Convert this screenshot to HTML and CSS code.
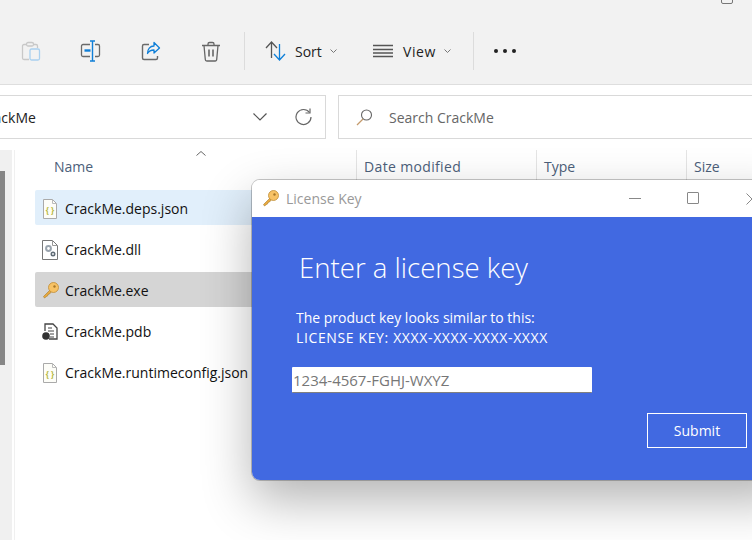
FILE: index.html
```html
<!DOCTYPE html>
<html lang="en">
<head>
<meta charset="UTF-8">
<meta name="viewport" content="width=device-width, initial-scale=1.0">
<title>License Key</title>
<link rel="stylesheet" href="styles.css">
</head>
<body>
    <div class="explorer">
        <div class="toolbar">
            <span class="parent-max"></span>
            <div class="tool">
                <svg width="20" height="20" viewBox="0 0 20 20" fill="none"><path d="M5 3.500H3a1.500 1.500 0 0 0-1.500 1.500v12A1.500 1.500 0 0 0 3 18.500h5M13 3.500h2A1.500 1.500 0 0 1 16.500 5v2" stroke="#c8c8c8" stroke-width="1.300"/><rect x="5.500" y="1.500" width="7" height="3.500" rx="1.500" stroke="#c8c8c8" stroke-width="1.300"/><rect x="9" y="8" width="9.500" height="11" rx="1.500" fill="#f2f2f2" stroke="#a9d0ef" stroke-width="1.300"/></svg>
            </div>
            <div class="tool">
                <svg width="22" height="22" viewBox="0 0 22 22" fill="none"><path d="M10 4.500H3A1.500 1.500 0 0 0 1.500 6v9A1.500 1.500 0 0 0 3 16.500h7M15 4.500h3A1.500 1.500 0 0 1 19.500 6v9a1.500 1.500 0 0 1-1.500 1.500h-3" stroke="#6a6a6a" stroke-width="1.300"/><path d="M4.500 10.500h6" stroke="#0f7fd8" stroke-width="2.400"/><path d="M10 1h5M12.500 1v20M10 21h5" stroke="#0f7fd8" stroke-width="1.400"/></svg>
            </div>
            <div class="tool">
                <svg width="20" height="20" viewBox="0 0 20 20" fill="none"><path d="M8 3.500H3A1.500 1.500 0 0 0 1.500 5v12A1.500 1.500 0 0 0 3 18.500h12a1.500 1.500 0 0 0 1.500-1.500v-2" stroke="#6a6a6a" stroke-width="1.400"/><path d="M13 1.500l5.500 5.500-5.500 5v-3c-3 0-5 .8-6.500 3.500 0-4.500 2.500-7.500 6.500-7.500z" fill="#f2f2f2" stroke="#0f7fd8" stroke-width="1.300" stroke-linejoin="round"/></svg>
            </div>
            <div class="tool">
                <svg width="20" height="21" viewBox="0 0 20 21" fill="none" stroke="#666" stroke-width="1.300"><path d="M1 4.500h18M7 4.500V3a1.500 1.500 0 0 1 1.500-1.500h3A1.500 1.500 0 0 1 13 3v1.500M3 4.500l1.300 14a1.500 1.500 0 0 0 1.500 1.500h8.400a1.500 1.500 0 0 0 1.500-1.500l1.300-14"/><path d="M8 8.500v7M12 8.500v7" stroke-width="1.600"/></svg>
            </div>
            <div class="sep first-sep"></div>
            <div class="menu sort">
                <svg width="21" height="20" viewBox="0 0 21 20" fill="none" stroke-width="1.300"><path d="M1 7l5.500-6 5.500 6M6.500 1v16" stroke="#555"/><path d="M9 13l5.500 6 5.500-6M14.500 19V3" stroke="#0f7fd8"/></svg>
                <span class="menu-label">Sort</span>
                <svg class="caret" width="7" height="4" viewBox="0 0 7 4" fill="none"><path d="M.5.500l3 3 3-3" stroke="#777"/></svg>
            </div>
            <div class="menu view">
                <svg width="20" height="14" viewBox="0 0 20 14" fill="none" stroke="#555" stroke-width="1.300"><path d="M0 1.500h20M0 5.500h20M0 9h20M0 12.500h20"/></svg>
                <span class="menu-label">View</span>
                <svg class="caret" width="7" height="4" viewBox="0 0 7 4" fill="none"><path d="M.5.500l3 3 3-3" stroke="#777"/></svg>
            </div>
            <div class="sep"></div>
            <div class="more"><i></i><i></i><i></i></div>
        </div>

        <div class="addressbar">
            <div class="address">
                <span class="address-text">CrackMe</span>
                <svg class="address-down" width="14" height="8" viewBox="0 0 14 8" fill="none"><path d="M.5.500L7 7 13.500.500" stroke="#555" stroke-width="1.200"/></svg>
                <svg class="refresh" width="17" height="18" viewBox="0 0 17 18" fill="none" stroke="#666" stroke-width="1.200"><path d="M14.500 4.500A7.500 7.500 0 1 0 16 9"/><path d="M15 .5v4.500h-4.500"/></svg>
            </div>
            <div class="search">
                <svg width="17" height="17" viewBox="0 0 17 17" fill="none"><circle cx="10.500" cy="6" r="5" stroke="#666" stroke-width="1.100"/><path d="M7 10L1 16" stroke="#c49a6c" stroke-width="1.300"/></svg>
                <span>Search CrackMe</span>
            </div>
        </div>

        <div class="content">
            <div class="nav"><div class="nav-thumb"></div></div>
            <div class="files">
                <div class="head">
                    <div class="col col-name">Name<svg class="sort-up" width="10" height="5" viewBox="0 0 10 5" fill="none"><path d="M.5 4.500L5 .5l4.500 4" stroke="#666"/></svg></div>
                    <div class="col col-date">Date modified</div>
                    <div class="col col-type">Type</div>
                    <div class="col col-size">Size</div>
                </div>
                <div class="rows">
                    <div class="row hover">
                        <svg class="ficon" width="16" height="20" viewBox="0 0 16 20" fill="none"><path d="M1.500 .5h9l4 4v15h-13z" fill="#fdfdf8" stroke="#aaa"/><path d="M10.500 .5v4h4" stroke="#bbb"/><text x="8" y="13.500" class="json-mark">{ }</text></svg>
                        CrackMe.deps.json
                    </div>
                    <div class="row">
                        <svg class="ficon" width="16" height="20" viewBox="0 0 16 20" fill="none"><path d="M.5 .5h10l5 5v14H.5z" fill="#fff" stroke="#777"/><path d="M10.500 .5v5h5" stroke="#999"/><circle cx="6.500" cy="8.500" r="2.400" stroke="#99a3ad" stroke-width="2"/><circle cx="11" cy="14" r="1.700" stroke="#5f6b76" stroke-width="1.600"/></svg>
                        CrackMe.dll
                    </div>
                    <div class="row selected">
                        <svg class="ficon key-icon" width="17" height="17" viewBox="0 0 17 17"><path d="M9 7L1.500 14.500l1 1.500 2-1.500 1-.5.500-1.500 1.500-.5 3-3.500z" fill="#e8a93f" stroke="#a67a2a" stroke-width=".6"/><circle cx="11.500" cy="5.500" r="5" fill="#f7c265" stroke="#c08d35" stroke-width=".8"/><circle cx="12.500" cy="4.500" r="1.200" fill="#a8782a"/></svg>
                        CrackMe.exe
                    </div>
                    <div class="row">
                        <svg class="ficon" width="16" height="18" viewBox="0 0 16 18" fill="none"><path d="M3 8V1h8l4 4v11H7" fill="#fff" stroke="#444" stroke-width="1.300"/><path d="M6 5h4M6 8h6M8 11h4M8 14h4" stroke="#444"/><circle cx="4" cy="13" r="3.800" fill="#333"/></svg>
                        CrackMe.pdb
                    </div>
                    <div class="row">
                        <svg class="ficon" width="16" height="20" viewBox="0 0 16 20" fill="none"><path d="M1.500 .5h9l4 4v15h-13z" fill="#fdfdf8" stroke="#aaa"/><path d="M10.500 .5v4h4" stroke="#bbb"/><text x="8" y="13.500" class="json-mark">{ }</text></svg>
                        CrackMe.runtimeconfig.json
                    </div>
                </div>
            </div>
        </div>
    </div>

    <div class="dialog">
        <div class="titlebar">
            <svg width="17" height="17" viewBox="0 0 17 17"><path d="M9 7L1.500 14.500l1 1.500 2-1.500 1-.5.500-1.500 1.500-.5 3-3.500z" fill="#e8a93f" stroke="#a67a2a" stroke-width=".6"/><circle cx="11.500" cy="5.500" r="5" fill="#f7c265" stroke="#c08d35" stroke-width=".8"/><circle cx="12.500" cy="4.500" r="1.200" fill="#a8782a"/></svg>
            <span class="title-text">License Key</span>
            <span class="win-min"></span>
            <span class="win-max"></span>
            <svg class="win-close" width="12" height="12" viewBox="0 0 12 12" fill="none"><path d="M.5.500l11 11M11.500.500l-11 11" stroke="#888"/></svg>
        </div>
        <div class="dialog-body">
            <h1>Enter a license key</h1>
            <p>The product key looks similar to this:<br><span class="key-format">LICENSE KEY: XXXX-XXXX-XXXX-XXXX</span></p>
            <input class="key-input" type="text" placeholder="1234-4567-FGHJ-WXYZ">
            <div class="actions"><button>Submit</button></div>
        </div>
    </div>
</body>
</html>
```

FILE: styles.css
```css
* {
    box-sizing: border-box;
}
html, body {
    height: 100%;
}
body {
    margin: 0;
    overflow: hidden;
    position: relative;
    background-color: #fff;
    font-family: "Open Sans", Arial, sans-serif;
    font-size: 14px;
    color: #1a1a1a;
}
svg {
    display: block;
    flex: none;
}

/* explorer behind */
.explorer {
    height: 100%;
    display: flex;
    flex-direction: column;
}
.toolbar {
    height: 85px;
    flex: none;
    padding: 32px 0 14px 1px;
    display: flex;
    align-items: center;
    background-color: #f2f2f2;
    border-bottom: 1px solid #dedede;
}
.parent-max {
    position: absolute;
    left: 721px;
    top: -8px;
    width: 12px;
    height: 12px;
    border: 1px solid #777;
    border-radius: 2px;
}
.tool {
    width: 60px;
    display: flex;
    justify-content: center;
}
.sep {
    width: 1px;
    height: 38px;
    background-color: #dcdcdc;
}
.first-sep {
    margin-left: 3px;
}
.menu {
    display: flex;
    align-items: center;
}
.menu-label {
    font-size: 14px;
    color: #222;
    margin: 0 8px 0 10px;
}
.sort {
    margin-left: 20px;
    width: 108px;
}
.sort .menu-label {
    margin-left: 9px;
}
.view {
    width: 100px;
}
.view .menu-label {
    letter-spacing: 0.6px;
}
.more {
    margin-left: 20px;
    display: flex;
    gap: 5px;
}
.more i {
    width: 4px;
    height: 4px;
    border-radius: 50%;
    background-color: #222;
}

.addressbar {
    height: 65px;
    flex: none;
    padding-top: 10px;
    display: flex;
    gap: 12px;
}
.address, .search {
    height: 44px;
    display: flex;
    align-items: center;
    border: 1px solid #d9d9d9;
    overflow: hidden;
}
.address {
    width: 326px;
    border-left: none;
}
.address-text {
    margin-left: -21px;
    width: 274px;
    flex: none;
    color: #222;
}
.address-down {
    margin-right: 28px;
}
.search {
    flex: 1;
    padding-left: 17px;
    border-right: none;
    color: #666;
}
.search span {
    margin-left: 16px;
}

.content {
    flex: 1;
    display: flex;
}
.nav {
    width: 12px;
    background-color: #f0f0f0;
    padding-top: 21px;
}
.nav-thumb {
    width: 5px;
    height: 194px;
    background-color: #868686;
}
.files {
    flex: 1;
    border-left: 1px solid #f0f0f0;
    margin-left: 2px;
}
.head {
    height: 30px;
    display: flex;
    color: #4c607a;
}
.col {
    padding: 7px 0 0 7px;
    border-right: 1px solid #e5e5e5;
}
.col-name {
    width: 342px;
    padding-left: 39px;
    position: relative;
}
.sort-up {
    position: absolute;
    left: 181px;
    top: 1px;
}
.col-date {
    width: 180px;
    letter-spacing: 0.35px;
}
.col-type {
    width: 150px;
}
.col-size {
    flex: 1;
    border-right: none;
}
.rows {
    padding: 10px 0 0 20px;
    display: flex;
    flex-direction: column;
    gap: 6px;
}
.row {
    height: 35px;
    display: flex;
    align-items: center;
    padding: 2px 0 0 7px;
    border-radius: 2px;
    color: #111;
}
.row .ficon {
    margin-right: 7px;
}
.row .key-icon {
    margin-right: 6px;
}
.row.hover {
    background-color: #e1effb;
}
.row.selected {
    background-color: #d5d5d5;
}
.json-mark {
    font-size: 8px;
    font-weight: 700;
    fill: #b5b83a;
    text-anchor: middle;
}

/* license dialog */
.dialog {
    position: absolute;
    left: 252px;
    top: 180px;
    width: 540px;
    height: 300px;
    border-radius: 8px;
    box-shadow: 0 20px 50px rgba(0, 0, 0, 0.3), 0 0 0 1px rgba(0, 0, 0, 0.22);
    overflow: hidden;
    display: flex;
    flex-direction: column;
}
.titlebar {
    height: 37px;
    flex: none;
    padding-left: 10px;
    display: flex;
    align-items: center;
    background-color: #fff;
}
.title-text {
    margin-left: 7px;
    width: 343px;
    color: #999;
}
.win-min {
    width: 12px;
    height: 1px;
    background-color: #888;
}
.win-max {
    width: 12px;
    height: 12px;
    margin: -1px 0 0 46px;
    border: 1px solid #888;
    border-radius: 1px;
}
.win-close {
    margin-left: 47px;
}
.dialog-body {
    flex: 1;
    padding: 32px 0 0 40px;
    background-color: #4169e1;
    color: #fff;
}
.dialog-body h1 {
    margin: 0 0 0 7px;
    font-size: 27.6px;
    font-weight: 300;
    line-height: 36px;
}
.dialog-body p {
    margin: 23px 0 0 4px;
    font-size: 14px;
    line-height: 20px;
}
.key-format {
    letter-spacing: 0.63px;
}
.key-input {
    display: block;
    width: 300px;
    height: 26px;
    margin-top: 19px;
    padding: 0 1px;
    border: none;
    border-bottom: 1px solid #808080;
    border-radius: 1px;
    font-family: inherit;
    font-size: 15px;
    background-color: #fff;
}
.key-input::placeholder {
    color: #777;
    opacity: 1;
}
.actions {
    width: 455px;
    margin-top: 20px;
    display: flex;
    justify-content: flex-end;
}
.actions button {
    width: 100px;
    height: 35px;
    background: transparent;
    border: 1px solid #fff;
    color: #fff;
    font-family: inherit;
    font-size: 14px;
}
```
